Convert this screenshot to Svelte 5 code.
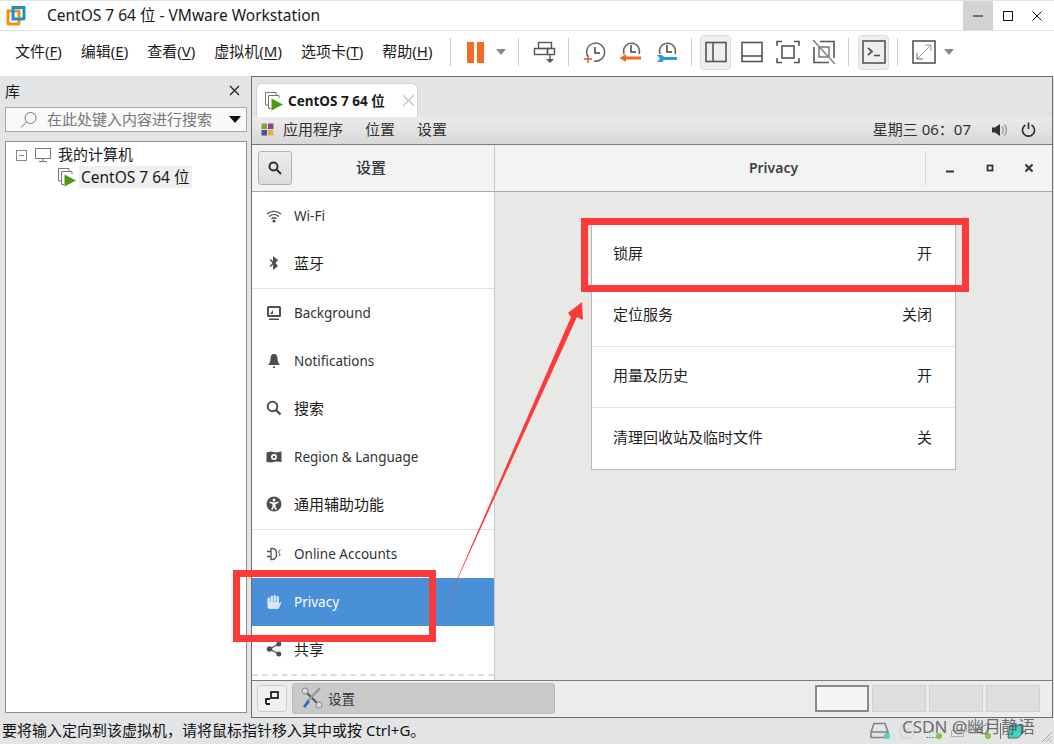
<script>
	const menus = [
		['文件(', 'F', ')'], ['编辑(', 'E', ')'], ['查看(', 'V', ')'],
		['虚拟机(', 'M', ')'], ['选项卡(', 'T', ')'], ['帮助(', 'H', ')']
	];
	const nav = [
		{ label: 'Wi-Fi', icon: 'wifi' },
		{ label: '蓝牙', icon: 'bt', sep: true, cjk: true },
		{ label: 'Background', icon: 'bg' },
		{ label: 'Notifications', icon: 'bell' },
		{ label: '搜索', icon: 'search', cjk: true },
		{ label: 'Region & Language', icon: 'region' },
		{ label: '通用辅助功能', icon: 'a11y', sep: true, cjk: true },
		{ label: 'Online Accounts', icon: 'online' },
		{ label: 'Privacy', icon: 'hand', active: true },
		{ label: '共享', icon: 'share', cjk: true }
	];
	const privacy = [
		['锁屏', '开'], ['定位服务', '关闭'], ['用量及历史', '开'], ['清理回收站及临时文件', '关']
	];
</script>

{#snippet vmIcon()}
	<svg class="vm-icon" width="20" height="20" viewBox="0 0 20 20">
		<path d="M5 14H1.500V1.500H12V4" fill="none" stroke="#777" />
		<path d="M7 17.500H4.500V4.500H15V7" fill="none" stroke="#777" />
		<path d="M7.500 7.500L19 13.500L7.500 19.500Z" fill="#4c9a14" />
	</svg>
{/snippet}

{#snippet navIcon(name)}
	<svg width="16" height="16" viewBox="0 0 16 16" fill="currentColor">
		{#if name === 'wifi'}
			<g fill="none" stroke="currentColor" stroke-width="1.400">
				<path d="M1 6C5 2.500 11 2.500 15 6" /><path d="M3.200 8.500C6 6 10 6 12.800 8.500" /><path d="M5.500 10.800C7 9.600 9 9.600 10.500 10.800" />
			</g>
			<circle cx="8" cy="13" r="1.600" />
		{:else if name === 'bt'}
			<path d="M7 1L12 5L9.500 8L12 11L7 15V9.800L4.600 12L3.600 11L6.500 8L3.600 5L4.600 4L7 6.200Z" />
		{:else if name === 'bg'}
			<path fill-rule="evenodd" d="M2.500 1H13.500A1.500 1.500 0 0 1 15 2.500V10.500A1.500 1.500 0 0 1 13.500 12H2.500A1.500 1.500 0 0 1 1 10.500V2.500A1.500 1.500 0 0 1 2.500 1ZM3 3V10H13V3ZM3 13.500H13V15H3Z" />
			<path d="M4 9L7 5V9Z" />
		{:else if name === 'bell'}
			<path d="M8 1C5.500 1 4.500 3 4.500 5.500C4.500 8.500 3.500 10.500 2 12H14C12.500 10.500 11.500 8.500 11.500 5.500C11.500 3 10.500 1 8 1ZM7 13.500H9V15H7Z" />
		{:else if name === 'search'}
			<circle cx="6.500" cy="6.500" r="4.800" fill="none" stroke="currentColor" stroke-width="2" />
			<path d="M10 10L14.500 14.500" stroke="currentColor" stroke-width="2.400" />
		{:else if name === 'region'}
			<path fill-rule="evenodd" d="M0.500 3.500L5 2.500L10 3.500L15.500 2.500V13L10 12.500L5 13.500L0.500 13ZM8 5A3 3 0 1 0 8 11A3 3 0 0 0 8 5Z" />
			<circle cx="8" cy="8" r="1.300" />
		{:else if name === 'a11y'}
			<path fill-rule="evenodd" d="M8 0.500A7.500 7.500 0 1 0 8 15.500A7.500 7.500 0 0 0 8 0.500ZM8 2.500A1.500 1.500 0 1 1 8 5.500A1.500 1.500 0 0 1 8 2.500ZM3.500 5.500L8 6.500L12.500 5.500V7L9.500 8V10.500L11 13.500L9.500 14L8 11L6.500 14L5 13.500L6.500 10.500V8L3.500 7Z" />
		{:else if name === 'online'}
			<path fill="none" stroke="currentColor" stroke-width="1.300" d="M5 2.500H6.500C9.500 2.500 10.500 5 10.500 8C10.500 11 9.500 13.500 6.500 13.500H5ZM1 5.500H5M1 10.500H5" />
			<path fill="none" stroke="currentColor" d="M14.500 4C12.500 4 12.500 6.500 13.500 7.500C14.500 8.500 14 10 12.500 10" />
		{:else if name === 'hand'}
			<rect x="1.500" y="3.500" width="2.400" height="7" rx="1.200" />
			<rect x="4.500" y="1.800" width="2.400" height="7" rx="1.200" />
			<rect x="7.500" y="1" width="2.400" height="7" rx="1.200" />
			<rect x="10.500" y="2" width="2.400" height="7" rx="1.200" />
			<path d="M1.500 8H12.900V9.500L14 8.500C15 8 15.500 8.800 15 9.600L13.500 13C13 14.500 12 15 11 15H4C2.500 15 1.500 14 1.500 12.500Z" />
		{:else if name === 'share'}
			<circle cx="3.500" cy="8" r="2.800" /><circle cx="12.800" cy="3" r="2.500" /><circle cx="12.800" cy="13" r="2.500" />
			<path d="M3.500 8L12.800 3M3.500 8L12.800 13" stroke="currentColor" stroke-width="1.400" />
		{/if}
	</svg>
{/snippet}

<div class="window">
	<header class="titlebar">
		<svg class="logo" width="20" height="21" viewBox="0 0 20 21">
			<path d="M2 6H13V18A1 1 0 0 1 12 19H3A1 1 0 0 1 2 18Z" fill="none" stroke="#f29111" stroke-width="3" />
			<path d="M7 2.500H18V13A1 1 0 0 1 17 14H7Z" fill="none" stroke="#1d8fc9" stroke-width="3" />
		</svg>
		<span class="title">CentOS 7 64 位 - VMware Workstation</span>
		<div class="winctl">
			<span class="hover"><svg width="12" height="12" viewBox="0 0 12 12"><path d="M1 6H11" stroke="#111" /></svg></span>
			<span><svg width="12" height="12" viewBox="0 0 12 12"><rect x="1.500" y="1.500" width="9" height="9" fill="none" stroke="#111" /></svg></span>
			<span><svg width="12" height="12" viewBox="0 0 12 12"><path d="M1.500 1.500L10.500 10.500M10.500 1.500L1.500 10.500" stroke="#111" /></svg></span>
		</div>
	</header>

	<nav class="toolbar">
		<div class="menus">
			{#each menus as [a, k, b]}
				<span class="menu">{a}<u>{k}</u>{b}</span>
			{/each}
		</div>
		<i class="tsep s0"></i>
		<div class="pause"><b></b><b></b></div>
		<i class="caret"></i>
		<i class="tsep s1"></i>
		<svg class="tool t-send" width="24" height="24" viewBox="0 0 24 24" fill="none" stroke="#555" stroke-width="1.400">
			<rect x="5.500" y="2.500" width="13" height="6" /><rect x="1.500" y="8.500" width="13" height="6" /><rect x="14.500" y="8.500" width="7" height="6" />
			<path d="M17 14V20" /><path d="M13 19H21L17 23Z" fill="#555" stroke="none" />
		</svg>
		<i class="tsep s2"></i>
		<svg class="tool t-a" width="24" height="24" viewBox="0 0 24 24" fill="none">
			<path d="M6 17A9 9 0 1 1 12 21" stroke="#666" stroke-width="1.500" /><path d="M13 7V13H18" stroke="#444" stroke-width="1.500" />
			<path d="M6 15V23M2 19H10" stroke="#e2622a" stroke-width="1.500" />
		</svg>
		<svg class="tool t-b" width="24" height="24" viewBox="0 0 24 24" fill="none">
			<path d="M5 14A8 8 0 1 1 20 14" stroke="#666" stroke-width="1.500" /><path d="M12 5V12H17" stroke="#444" stroke-width="1.500" />
			<path d="M0.500 18L7 14V16.500H22V19.500H7V22Z" fill="#f0691f" />
		</svg>
		<svg class="tool t-c" width="24" height="24" viewBox="0 0 24 24" fill="none">
			<path d="M5 14A8 8 0 1 1 20 14" stroke="#666" stroke-width="1.500" /><path d="M12 5V12H17" stroke="#444" stroke-width="1.500" />
			<path d="M2 15H7L9 17H22V20H9L7 22H2L5 18.500Z" fill="#2a9ad8" />
		</svg>
		<i class="tsep s3"></i>
		<span class="toggle t1"><svg width="22" height="22" viewBox="0 0 22 22" fill="none" stroke="#555" stroke-width="1.600"><rect x="1" y="1.500" width="20" height="19" /><path d="M8 1.500V20.500" /></svg></span>
		<svg class="tool p1" width="22" height="22" viewBox="0 0 22 22" fill="none" stroke="#555" stroke-width="1.600"><rect x="1" y="1.500" width="20" height="19" /><path d="M1 15H21" /></svg>
		<svg class="tool p2" width="24" height="24" viewBox="0 0 24 24" fill="none" stroke="#555" stroke-width="1.600"><path d="M1 6V1.500H6M18 1.500H23V6M23 18V22.500H18M6 22.500H1V18" /><rect x="6" y="6" width="12" height="12" /></svg>
		<svg class="tool p3" width="24" height="24" viewBox="0 0 24 24" fill="none" stroke="#555" stroke-width="1.600"><path d="M8 1.500H22V18M17 22.500H2V7" /><rect x="7" y="7" width="10" height="10" stroke-width="1.200" /><path d="M1 0L23 24" stroke="#7d8a96" /></svg>
		<i class="tsep s4"></i>
		<span class="toggle t2"><svg width="24" height="24" viewBox="0 0 24 24" fill="none" stroke="#555" stroke-width="1.600"><rect x="1" y="1" width="22" height="22" /><path d="M6 8L10 11.500L6 15" stroke-width="1.800" /><path d="M12 15.500H18" /></svg></span>
		<i class="tsep s5"></i>
		<svg class="tool t-full" width="24" height="24" viewBox="0 0 24 24" fill="none"><rect x="1" y="1" width="22" height="22" stroke="#555" stroke-width="1.600" /><path d="M5 19L19 5M13 5H19V11" stroke="#999" /><path d="M5 13V19H11" stroke="#666" /></svg>
		<i class="caret c2"></i>
	</nav>

	<main class="body">
		<aside class="library">
			<div class="lib-head"><span>库</span><svg width="11" height="11" viewBox="0 0 11 11"><path d="M1 1L10 10M10 1L1 10" stroke="#222" stroke-width="1.300" /></svg></div>
			<div class="lib-search">
				<svg width="20" height="18" viewBox="0 0 20 18" fill="none" stroke="#777"><circle cx="11.500" cy="7" r="5.500" /><path d="M7.500 11L2 16.500" /></svg>
				<span>在此处键入内容进行搜索</span>
				<i></i>
			</div>
			<div class="tree">
				<div class="tree-root">
					<span class="minus"></span>
					<svg width="18" height="16" viewBox="0 0 18 16" fill="none" stroke="#777"><rect x="1.500" y="1.500" width="15" height="10" /><path d="M9 11.500V14M5 14.500H13" /></svg>
					<span class="root-label">我的计算机</span>
				</div>
				<div class="tree-vm">
					{@render vmIcon()}
					<span class="sel">CentOS 7 64 位</span>
				</div>
			</div>
		</aside>

		<section class="vm">
			<div class="tabstrip">
				<div class="tab">
					{@render vmIcon()}
					<b>CentOS 7 64 位</b>
					<svg width="13" height="13" viewBox="0 0 13 13"><path d="M1 1L12 12M12 1L1 12" stroke="#c8c8c8" stroke-width="1.500" /></svg>
				</div>
			</div>

			<div class="topbar">
				<svg width="15" height="15" viewBox="0 0 15 15">
					<rect x="1.500" y="1.500" width="5.500" height="5.500" fill="#7ba53a" /><rect x="8" y="1.500" width="5.500" height="5.500" fill="#9a3f8e" />
					<rect x="1.500" y="8" width="5.500" height="5.500" fill="#4a4f9e" /><rect x="8" y="8" width="5.500" height="5.500" fill="#e0b23c" />
				</svg>
				<span class="tb-a">应用程序</span><span class="tb-b">位置</span><span class="tb-b">设置</span>
				<span class="clock">星期三 06：07</span>
				<svg class="vol" width="16" height="14" viewBox="0 0 16 14"><path d="M0 4.500H3L8 1V13L3 9.500H0Z" fill="#333" /><path d="M10 3.500C11.500 5.500 11.500 8.500 10 10.500M12.500 1.500C15 4.500 15 9.500 12.500 12.500" fill="none" stroke="#999" stroke-width="1.300" /></svg>
				<svg class="power" width="15" height="15" viewBox="0 0 15 15" fill="none" stroke="#333" stroke-width="1.700"><path d="M4.500 3A6 6 0 1 0 10.500 3" /><path d="M7.500 0.500V7" /></svg>
			</div>

			<div class="gnome-head">
				<div class="gh-left">
					<span class="search-btn"><svg width="14" height="14" viewBox="0 0 14 14" fill="none" stroke="#2e3436" stroke-width="2"><circle cx="5.500" cy="5.500" r="4" /><path d="M8.500 8.500L13 13" /></svg></span>
					<span class="gh-title">设置</span>
				</div>
				<div class="gh-right">
					<span class="gh-privacy">Privacy</span>
					<div class="gh-ctl">
						<svg width="10" height="10" viewBox="0 0 10 10"><path d="M1 8.500H9" stroke="#2e3436" stroke-width="2" /></svg>
						<svg width="10" height="10" viewBox="0 0 10 10"><rect x="2.500" y="2.500" width="5" height="5" fill="none" stroke="#2e3436" stroke-width="1.800" /></svg>
						<svg width="10" height="10" viewBox="0 0 10 10"><path d="M1.500 1.500L8.500 8.500M8.500 1.500L1.500 8.500" stroke="#2e3436" stroke-width="2" /></svg>
					</div>
				</div>
			</div>

			<div class="gnome-body">
				<ul class="sidebar">
					{#each nav as item}
						<li class="nav" class:active={item.active} class:sep={item.sep} class:cjk={item.cjk}>
							{@render navIcon(item.icon)}
							<span>{item.label}</span>
						</li>
					{/each}
				</ul>
				<div class="content">
					<div class="panel">
						{#each privacy as [label, value]}
							<div class="row"><span>{label}</span><span>{value}</span></div>
						{/each}
					</div>
				</div>
			</div>

			<div class="taskbar">
				<span class="desk-btn"><svg width="14" height="14" viewBox="0 0 14 14" fill="none" stroke="#222" stroke-width="1.800"><rect x="6" y="1" width="7" height="6" /><path d="M1 13V8H5M1 13H5" /></svg></span>
				<div class="task">
					<svg width="22" height="22" viewBox="0 0 22 22" fill="none">
						<path d="M3 3L19 19" stroke="#555" stroke-width="2" /><path d="M19 1L5 16" stroke="#999" stroke-width="2.400" />
						<path d="M7 13L2 19L4 21L9 15Z" fill="#2f6db5" />
						<circle cx="4" cy="4" r="3" fill="#ddd" stroke="#888" /><circle cx="18" cy="18" r="3" fill="#ddd" stroke="#888" />
					</svg>
					<span>设置</span>
				</div>
				<div class="pager">
					<i class="on"></i><i></i><i></i><i></i>
				</div>
			</div>
		</section>
	</main>

	<footer class="statusbar">
		<span>要将输入定向到该虚拟机，请将鼠标指针移入其中或按 Ctrl+G。</span>
		<div class="tray">
			<svg width="22" height="18" viewBox="0 0 22 18" fill="none" stroke="#777" stroke-width="1.500"><path d="M4 1.500H15L18 10V15.500H1V10Z" /><path d="M1 10H18" /><circle cx="17" cy="14" r="3" fill="#35d4c6" stroke="none" /></svg>
			<svg width="20" height="18" viewBox="0 0 20 18" fill="none" stroke="#ccc"><circle cx="9" cy="9" r="7.500" /><circle cx="9" cy="9" r="2.500" /></svg>
			<svg width="20" height="18" viewBox="0 0 20 18" fill="none" stroke="#777"><path d="M2 15.500H15" stroke-dasharray="2 1" /><path d="M9 2V10" /><circle cx="15" cy="14" r="3" fill="#7ac51f" stroke="none" /></svg>
			<svg width="20" height="18" viewBox="0 0 20 18" fill="none" stroke="#aaa"><rect x="4.500" y="2.500" width="12" height="7" /><rect x="1.500" y="8.500" width="12" height="6" /></svg>
			<svg width="18" height="18" viewBox="0 0 18 18" fill="none" stroke="#777"><path d="M1 6H5L12 1V14L5 10H1Z" /><circle cx="12" cy="14" r="3" fill="#7ac51f" stroke="none" /></svg>
			<i class="bar"></i>
			<svg width="18" height="18" viewBox="0 0 18 18"><path d="M3 3H16V11L11 16H1Z" fill="#2fd2bc" stroke="#555" /></svg>
		</div>
		<span class="watermark">CSDN @幽月静语</span>
		<svg class="grip" width="14" height="14" viewBox="0 0 14 14" stroke="#aaa"><path d="M13 3L3 13M13 7L7 13M13 11L11 13" /></svg>
	</footer>

	<svg class="marks" width="1054" height="744" viewBox="0 0 1054 744">
		<rect x="584.500" y="221.500" width="381" height="67" fill="none" stroke="#fd3a3a" stroke-width="7" />
		<rect x="236.500" y="573.500" width="196" height="65" fill="none" stroke="#fd3a3a" stroke-width="7" />
		<path d="M444 609L571 317L568 313L582 302L583 320L577 317Z" fill="#fd3a3a" />
	</svg>
</div>

<style>
	:global(body) { margin: 0; }

	.window {
		position: relative;
		width: 1054px;
		height: 744px;
		overflow: hidden;
		display: flex;
		flex-direction: column;
		background: #e3e4e6;
		font-family: "Noto Sans", "Noto Sans CJK SC", sans-serif;
		color: #1a1a1a;
	}

	.titlebar {
		height: 30px;
		flex: none;
		margin-top: 1px;
		display: flex;
		align-items: center;
		background: #fff;
		border-bottom: 1px solid #e2e2e2;
		box-sizing: border-box;
	}
	.logo { margin-left: 6px; }
	.title { margin-left: 21px; font-size: 15.5px; margin-bottom: 2px; }
	.winctl { margin-left: auto; margin-right: 3px; display: flex; height: 100%; }
	.winctl span { width: 29px; display: flex; align-items: center; justify-content: center; }
	.winctl .hover { width: 30px; background: #d3d3d3; }

	.toolbar {
		height: 45px;
		flex: none;
		display: flex;
		align-items: center;
		padding-bottom: 3px;
		box-sizing: border-box;
		background: #fff;
	}
	.menus { flex: none; width: 422px; display: flex; margin: 0 0 3px 15px; font-size: 15px; gap: 19px; white-space: nowrap; }
	.menu u { text-underline-offset: 2px; }
	.tsep { flex: none; width: 1px; height: 28px; background: #ccc; }
	.s0 { margin-left: 13px; }
	.pause { display: flex; gap: 3px; margin-left: 16px; }
	.pause b { width: 7px; height: 21px; background: #f36c24; }
	.caret { width: 0; height: 0; margin-left: 12px; border: 5px solid transparent; border-top: 6px solid #888; border-bottom: 0; }
	.s1 { margin-left: 12px; }
	.tool { flex: none; }
	.t-send { margin-left: 14px; }
	.s2 { margin-left: 11px; }
	.t-a { margin-left: 13px; }
	.t-b { margin-left: 13px; }
	.t-c { margin-left: 12px; }
	.s3 { margin-left: 12px; }
	.toggle {
		flex: none;
		display: flex;
		align-items: center;
		justify-content: center;
		width: 31px;
		height: 35px;
		background: #eceef0;
		border: 1px solid #dcdcdc;
		border-radius: 4px;
		box-sizing: border-box;
	}
	.t1 { margin-left: 8px; }
	.p1 { margin-left: 10px; }
	.p2 { margin-left: 13px; }
	.p3 { margin-left: 12px; }
	.s4 { margin-left: 12px; }
	.t2 { margin-left: 9px; }
	.s5 { margin-left: 8px; }
	.t-full { margin-left: 14px; }
	.c2 { margin-left: 8px; }

	.body { flex: 1; display: flex; min-height: 0; }

	.library { width: 251px; flex: none; display: flex; flex-direction: column; padding-left: 5px; box-sizing: border-box; font-size: 15px; }
	.lib-head { height: 31px; display: flex; align-items: center; justify-content: space-between; padding: 0 11px 3px 0; box-sizing: border-box; }
	.lib-search {
		height: 25px;
		width: 242px;
		display: flex;
		align-items: center;
		background: #f9f9f9;
		border: 1px solid #a9a9a9;
		box-sizing: border-box;
		color: #777;
	}
	.lib-search span { margin-bottom: 2px; }
	.lib-search svg { margin: 0 8px 0 13px; }
	.lib-search i { margin-left: auto; margin-right: 5px; width: 0; height: 0; border: 6px solid transparent; border-top: 7px solid #111; border-bottom: 0; }
	.tree {
		flex: none;
		width: 242px;
		height: 572px;
		margin-top: 9px;
		background: #fff;
		border: 1px solid #8f8f8f;
		box-sizing: border-box;
		padding-top: 2px;
	}
	.tree-root { display: flex; align-items: center; height: 22px; padding-left: 10px; gap: 5px; }
	.root-label { margin: 0 0 3px 1px; }
	.minus { width: 9px; height: 9px; border: 1px solid #888; margin-right: 2px; background: linear-gradient(#888, #888) center / 5px 1px no-repeat; }
	.tree-vm { display: flex; align-items: center; height: 22px; padding-left: 51px; gap: 2px; }
	.sel { background: #f0f0f0; padding: 0 2px; font-size: 15.5px; line-height: 22px; white-space: nowrap; }

	.vm {
		flex: 1;
		display: flex;
		flex-direction: column;
		margin-right: 1px;
		border: 1px solid #6d6d6d;
		box-sizing: border-box;
		min-width: 0;
	}
	.tabstrip { height: 40px; flex: none; display: flex; align-items: flex-end; padding-left: 4px; background: #e3e4e6; }
	.tab {
		width: 162px;
		height: 34px;
		box-sizing: border-box;
		display: flex;
		align-items: center;
		padding-left: 7px;
		gap: 4px;
		background: #fff;
		border: 1px solid #d4d4d4;
		border-bottom: 0;
		border-radius: 6px 6px 0 0;
		font-size: 13.5px;
		white-space: nowrap;
	}
	.tab b { margin-bottom: 2px; }
	.tab svg:last-child { margin-left: 13px; }
	.vm-icon { flex: none; }

	.topbar {
		height: 28px;
		flex: none;
		display: flex;
		align-items: center;
		padding: 0 16px 2px 8px;
		background: linear-gradient(#ececec, #d8d8d8);
		border-bottom: 1px solid #7c7c7c;
		box-sizing: border-box;
		font-size: 15px;
		color: #333;
	}
	.tb-a { margin-left: 8px; }
	.tb-a, .tb-b, .clock { padding-bottom: 2px; }
	.tb-b { margin-left: 22px; }
	.clock { margin-left: auto; }
	.vol { margin-left: 21px; }
	.power { margin-left: 13px; }

	.gnome-head { height: 47px; flex: none; display: flex; background: #f3f3f3; border-bottom: 1px solid #aaa; box-sizing: border-box; }
	.gh-left { width: 243px; flex: none; display: flex; align-items: center; padding-left: 6px; box-sizing: border-box; border-right: 1px solid #c8c8c8; }
	.search-btn { width: 34px; height: 34px; display: flex; align-items: center; justify-content: center; background: linear-gradient(#ededed, #dcdcdc); border: 1px solid #b0b0b0; border-radius: 3px; box-sizing: border-box; }
	.gh-title { margin-left: 64px; font-size: 15px; font-weight: 500; color: #2e3436; padding-bottom: 3px; }
	.gh-right { flex: 1; display: flex; align-items: center; min-width: 0; }
	.gh-privacy { flex: 1; text-align: center; font-size: 14px; font-weight: 600; color: #3d4244; margin-right: -127px; padding-bottom: 2px; }
	.gh-ctl { width: 127px; height: 34px; flex: none; display: flex; align-items: center; justify-content: space-between; padding: 0 18px 0 19px; box-sizing: border-box; border-left: 1px solid #d8d8d8; }

	.gnome-body { flex: 1; display: flex; min-height: 0; }
	.sidebar { width: 243px; flex: none; margin: 0; padding: 0; list-style: none; background: #fff; border-right: 1px solid #c8c8c8; box-sizing: border-box; overflow: hidden; }
	.nav { height: 48px; display: flex; align-items: center; gap: 12px; padding: 0 0 1px 14px; font-size: 13.5px; color: #2e3436; box-sizing: border-box; }
	.nav.cjk { font-size: 15px; color: #1a1a1a; padding-bottom: 3px; }
	.nav svg { color: #4a4f51; flex: none; }
	.nav.sep { border-bottom: 1px solid #e2e2e2; height: 49px; }
	.nav:last-child { height: 50px; border-bottom: 2px dashed #dcdcdc; }
	.nav.active { background: #4a90d9; color: #fff; }
	.nav.active svg { color: #d8e6f6; }
	.content { flex: 1; background: #e8e8e7; padding: 33px 0 0 96px; }
	.panel { width: 365px; background: #fff; border: 1px solid #b9b9b9; border-top: 0; box-sizing: border-box; }
	.row { height: 61px; display: flex; align-items: center; justify-content: space-between; padding: 0 23px 5px 21px; font-size: 15px; color: #1f1f1f; border-bottom: 1px solid #e3e3e3; box-sizing: border-box; }
	.row:last-child { border-bottom: 0; }

	.taskbar { height: 37px; flex: none; display: flex; align-items: center; padding: 0 0 2px 5px; background: #ececec; border-top: 1px solid #7c7c7c; box-sizing: border-box; }
	.desk-btn { width: 30px; height: 27px; display: flex; align-items: center; justify-content: center; background: #f0f0f0; border: 1px solid #ccc; border-radius: 3px; box-sizing: border-box; }
	.task { width: 263px; height: 31px; margin-left: 5px; display: flex; align-items: center; gap: 5px; padding-left: 8px; box-sizing: border-box; background: #c9c9c9; border: 1px solid #bbb; border-radius: 3px; font-size: 13.5px; color: #333; }
	.pager { margin-left: auto; margin-right: 12px; display: flex; gap: 3px; }
	.pager i { width: 54px; height: 27px; background: #dedede; border: 1px solid #d0d0d0; box-sizing: border-box; }
	.pager .on { background: #f5f5f5; border: 2px solid #8a8a8a; }

	.statusbar { height: 26px; flex: none; display: flex; align-items: center; padding: 0 0 3px 2px; box-sizing: border-box; font-size: 15px; color: #111; position: relative; }
	.tray { position: absolute; left: 870px; top: 4px; display: flex; align-items: center; gap: 6px; opacity: 0.9; }
	.bar { width: 1px; height: 16px; background: #666; }
	.watermark { position: absolute; left: 902px; top: -5px; font-size: 17px; color: rgba(70, 70, 70, 0.75); white-space: nowrap; }
	.grip { position: absolute; right: 1px; bottom: 1px; }

	.marks { position: absolute; left: 0; top: 0; pointer-events: none; }
</style>
